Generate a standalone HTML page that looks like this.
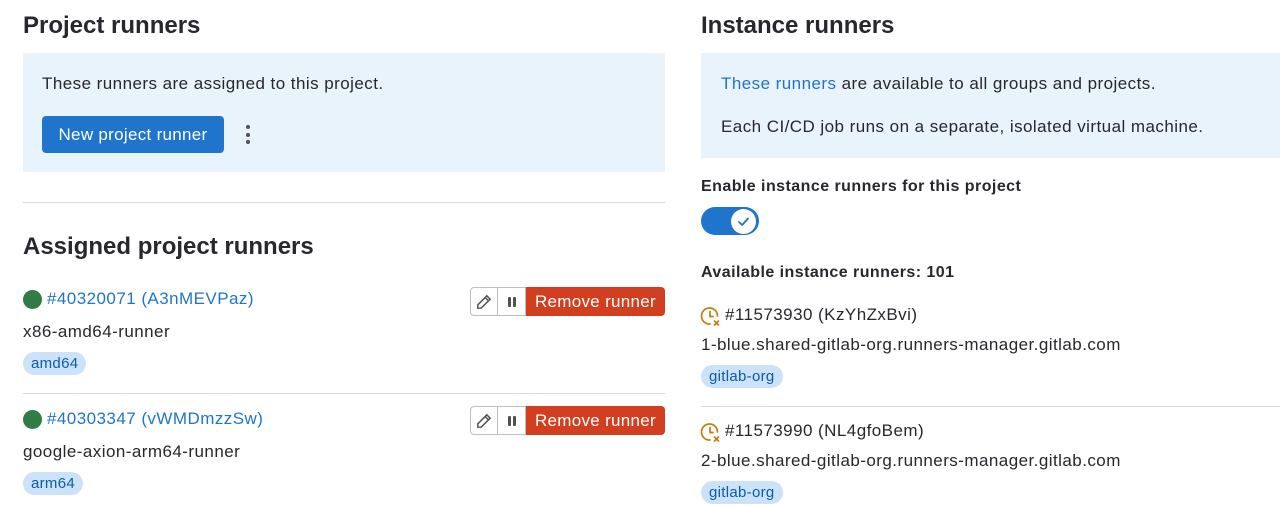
<!DOCTYPE html>
<html><head><meta charset="utf-8"><style>
*{margin:0;padding:0;box-sizing:border-box}
body{width:1280px;height:506px;overflow:hidden;background:#fff;font-family:"Liberation Sans",sans-serif;color:#28272d;position:relative}
.a{position:absolute;white-space:nowrap}
h2{font-size:24px;font-weight:bold;line-height:30px;color:#28272d;position:absolute}
.t{font-size:17px;line-height:22px;letter-spacing:0.45px}
.b{font-size:16px;font-weight:bold;line-height:20px;letter-spacing:0.45px}
.box{position:absolute;background:#e9f3fc}
.lnk{color:#1f75cb}
.badge{position:absolute;background:#cbe2f9;color:#0b5cad;border-radius:12px;font-size:15px;line-height:23px;padding:0 8px;letter-spacing:0.3px}
.dot{position:absolute;width:19px;height:19px;border-radius:50%;background:#2f7d45}
.hr{position:absolute;height:1px;background:#dcdcde}
.grp{position:absolute;height:29px;display:flex}
.ib{width:28px;height:29px;border:1px solid #bfbfc3;background:#fff;display:flex;align-items:center;justify-content:center}
.rm{background:#d23e20;color:#fff;font-size:17px;line-height:29px;border-radius:0 4px 4px 0;width:139px;text-align:center;letter-spacing:0.3px}
</style></head><body>
<h2 style="left:23px;top:11px">Project runners</h2>
<div class="box" style="left:23px;top:53px;width:642px;height:119px"></div>
<div class="a t" style="left:42px;top:73px">These runners are assigned to this project.</div>
<div class="a" style="left:42px;top:116px;width:182px;height:37px;background:#1f75cb;border-radius:4px;color:#fff;font-size:17px;line-height:37px;text-align:center;letter-spacing:0.3px">New project runner</div>
<div class="a" style="left:246px;top:125px;width:4px;height:19px"><div style="width:4px;height:4px;border-radius:2px;background:#535158;margin-bottom:3.5px"></div><div style="width:4px;height:4px;border-radius:2px;background:#535158;margin-bottom:3.5px"></div><div style="width:4px;height:4px;border-radius:2px;background:#535158"></div></div>
<div class="hr" style="left:23px;top:202px;width:642px"></div>
<h2 style="left:23px;top:232px">Assigned project runners</h2>

<div class="dot" style="left:23px;top:290px"></div>
<div class="a t lnk" style="left:47px;top:288px">#40320071 (A3nMEVPaz)</div>
<div class="grp" style="left:470px;top:287px">
<div class="ib" style="border-radius:4px 0 0 4px"><svg width="18" height="18" viewBox="0 0 16 16" fill="none" stroke="#535158" stroke-width="1.3"><path d="M10.5 2.5l3 3-8 8H2.5v-3z M9 4l3 3"/></svg></div>
<div class="ib" style="border-left:none"><svg width="12" height="12" viewBox="0 0 12 12"><rect x="2" y="1" width="3" height="10" rx="1" fill="#535158"/><rect x="7" y="1" width="3" height="10" rx="1" fill="#535158"/></svg></div>
<div class="rm">Remove runner</div></div>
<div class="a t" style="left:23px;top:321px">x86-amd64-runner</div>
<div class="badge" style="left:23px;top:352px">amd64</div>
<div class="hr" style="left:23px;top:393px;width:642px"></div>

<div class="dot" style="left:23px;top:410px"></div>
<div class="a t lnk" style="left:47px;top:408px">#40303347 (vWMDmzzSw)</div>
<div class="grp" style="left:470px;top:406px">
<div class="ib" style="border-radius:4px 0 0 4px"><svg width="18" height="18" viewBox="0 0 16 16" fill="none" stroke="#535158" stroke-width="1.3"><path d="M10.5 2.5l3 3-8 8H2.5v-3z M9 4l3 3"/></svg></div>
<div class="ib" style="border-left:none"><svg width="12" height="12" viewBox="0 0 12 12"><rect x="2" y="1" width="3" height="10" rx="1" fill="#535158"/><rect x="7" y="1" width="3" height="10" rx="1" fill="#535158"/></svg></div>
<div class="rm">Remove runner</div></div>
<div class="a t" style="left:23px;top:441px">google-axion-arm64-runner</div>
<div class="badge" style="left:23px;top:472px">arm64</div>

<h2 style="left:701px;top:11px">Instance runners</h2>
<div class="box" style="left:701px;top:53px;width:579px;height:105px"></div>
<div class="a t" style="left:721px;top:73px"><span class="lnk">These runners</span> are available to all groups and projects.</div>
<div class="a t" style="left:721px;top:116px">Each CI/CD job runs on a separate, isolated virtual machine.</div>
<div class="a b" style="left:701px;top:177px">Enable instance runners for this project</div>
<div class="a" style="left:701px;top:207px;width:58px;height:28px;border-radius:14px;background:#1f75cb"><div style="position:absolute;left:30px;top:1.5px;width:25px;height:25px;border-radius:50%;background:#fff"><svg width="25" height="25" viewBox="0 0 25 25" fill="none" stroke="#1f75cb" stroke-width="1.8" stroke-linecap="round" stroke-linejoin="round"><path d="M8 13l3.2 3L17 9.5"/></svg></div></div>
<div class="a b" style="left:701px;top:263px">Available instance runners: 101</div>

<svg class="a" style="left:700px;top:306px" width="22" height="22" viewBox="0 0 22 22" fill="none" stroke="#c17d10" stroke-width="1.7" stroke-linecap="round"><path d="M17.5 10A8 8 0 1 0 10 18"/><path d="M10 5.5V10.5H13"/><path d="M14.5 15l4 4M18.5 15l-4 4"/></svg>
<div class="a t" style="left:725px;top:304px">#11573930 (KzYhZxBvi)</div>
<div class="a t" style="left:701px;top:334px">1-blue.shared-gitlab-org.runners-manager.gitlab.com</div>
<div class="badge" style="left:701px;top:365px">gitlab-org</div>
<div class="hr" style="left:701px;top:406px;width:579px"></div>

<svg class="a" style="left:700px;top:422px" width="22" height="22" viewBox="0 0 22 22" fill="none" stroke="#c17d10" stroke-width="1.7" stroke-linecap="round"><path d="M17.5 10A8 8 0 1 0 10 18"/><path d="M10 5.5V10.5H13"/><path d="M14.5 15l4 4M18.5 15l-4 4"/></svg>
<div class="a t" style="left:725px;top:420px">#11573990 (NL4gfoBem)</div>
<div class="a t" style="left:701px;top:450px">2-blue.shared-gitlab-org.runners-manager.gitlab.com</div>
<div class="badge" style="left:701px;top:481px">gitlab-org</div>
</body></html>
